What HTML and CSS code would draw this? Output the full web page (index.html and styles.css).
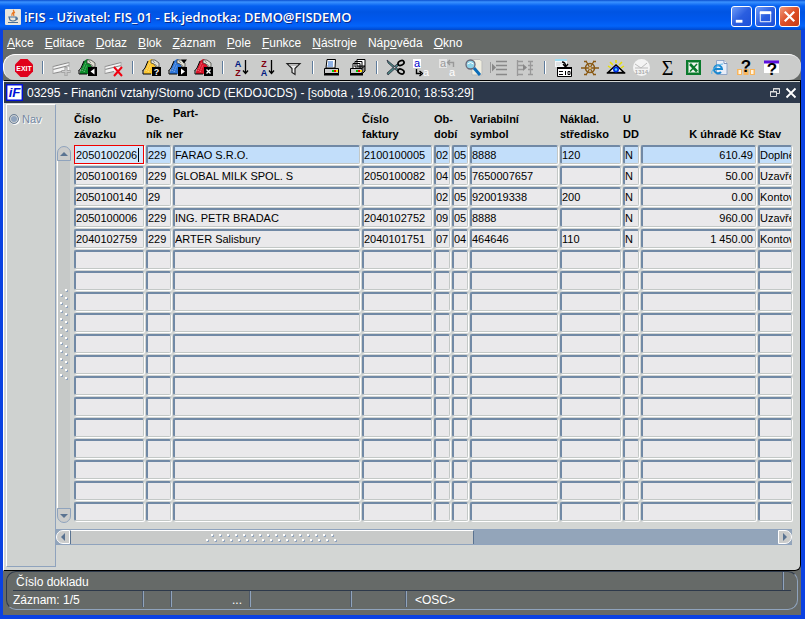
FILE: index.html
```html
<!DOCTYPE html>
<html lang="cs">
<head>
    <meta charset="UTF-8">
    <meta name="viewport" content="width=device-width, initial-scale=1.0">
    <title>iFIS</title>
    <link rel="stylesheet" href="styles.css">
</head>
<body>
    <svg class="defs" aria-hidden="true">
        <symbol id="hand" viewBox="0 0 20 20">
            <path d="M2 14 6 3l3-2 3 1 5 6-4 3-3 5H2z" fill="currentColor"/>
            <path d="M1 12.500 3 10M1 12v4h8M6 3 3 10" fill="none" stroke="#000"/>
            <path d="M4 13 8 4M6 14l3-7" stroke="#fff" stroke-opacity=".5" stroke-dasharray="1 1"/>
            <path d="M9 2h4l4 3v4h-3l-2-3-3-1z" fill="#deded0" stroke="#333" stroke-width=".7"/>
            <path d="M11 3l2 2M13 6l2 2" stroke="#777" stroke-width=".7"/>
            <path d="M10 9h9v9h-9z" fill="#000"/>
        </symbol>
        <symbol id="sheet" viewBox="0 0 20 20">
            <path d="M1 8 17 4v8L1 16z" fill="#f4f4f4"/>
            <path d="M1 8.500 17 4.500M1 11.500l16-4M1 15.500l9-2" stroke="#888" stroke-width="1.200"/>
            <path d="M1 8v8M17 4v5" stroke="#aaa"/>
        </symbol>
    </svg>

    <header class="title-bar">
        <svg class="java" viewBox="0 0 16 16">
            <rect width="16" height="16" rx="1" fill="#e9e6dd"/>
            <path d="M8 1c3 2-3 3-1 6M10 3c-2 1-2 2-1 4" fill="none" stroke="#e87722" stroke-width="1.200"/>
            <path d="M4 8h7v3q-3 2-6 0zM11 8.500q2 0 1 2h-1.500M3 13.500h10" fill="none" stroke="#4a7097" stroke-width="1.200"/>
        </svg>
        <h1>iFIS - Uživatel: FIS_01 - Ek.jednotka: DEMO@FISDEMO</h1>
        <button class="win-btn" aria-label="Minimalizovat"><svg viewBox="0 0 20 20"><path d="M4 15h7" stroke="#fff" stroke-width="3"/></svg></button>
        <button class="win-btn" aria-label="Maximalizovat"><svg viewBox="0 0 20 20"><path d="M4.500 5.500h11v10h-11z" fill="none" stroke="#fff"/><path d="M4 6h12" stroke="#fff" stroke-width="3"/></svg></button>
        <button class="win-btn close" aria-label="Zavřít"><svg viewBox="0 0 20 20"><path d="M5 5l10 10M15 5 5 15" stroke="#fff" stroke-width="2.300"/></svg></button>
    </header>

    <nav class="menu">
        <a href="#"><u>A</u>kce</a>
        <a href="#"><u>E</u>ditace</a>
        <a href="#"><u>D</u>otaz</a>
        <a href="#"><u>B</u>lok</a>
        <a href="#"><u>Z</u>áznam</a>
        <a href="#"><u>P</u>ole</a>
        <a href="#"><u>F</u>unkce</a>
        <a href="#"><u>N</u>ástroje</a>
        <a href="#">Náp<u>o</u>věda</a>
        <a href="#"><u>O</u>kno</a>
    </nav>

    <div class="toolbar">
        <button aria-label="Konec"><svg viewBox="0 0 20 20"><path d="M6.500 1h7L19 6.500v7L13.500 19h-7L1 13.500v-7z" fill="#e0001b"/><text x="10" y="12.500" class="t-exit">EXIT</text></svg></button>
        <i></i>
        <button aria-label="Vložit záznam"><svg viewBox="0 0 20 20"><use href="#sheet"/><path d="M14 9v9M9.500 13.500h9" stroke="#999" stroke-width="3"/><path d="M14 9.500v8M10 13.500h8" stroke="#ccc" stroke-width="1.400"/></svg></button>
        <button class="green" aria-label="Duplikovat"><svg viewBox="0 0 20 20"><use href="#hand"/><path d="M16.500 10.500v6l-4-3z" fill="#fff"/></svg></button>
        <button aria-label="Smazat záznam"><svg viewBox="0 0 20 20"><use href="#sheet"/><path d="M10 9l8 9M18 9l-8 9" stroke="#f00010" stroke-width="2"/></svg></button>
        <i></i>
        <button class="yellow" aria-label="Zadat dotaz"><svg viewBox="0 0 20 20"><use href="#hand"/><text x="14.500" y="17" class="t-badge">?</text></svg></button>
        <button class="blue" aria-label="Provést dotaz"><svg viewBox="0 0 20 20"><use href="#hand"/><path d="M13 10.500v6l4-3z" fill="#fff"/><path d="M13 1.500h6l-3 4z" fill="#000"/></svg></button>
        <button class="red" aria-label="Zrušit dotaz"><svg viewBox="0 0 20 20"><use href="#hand"/><path d="M12.500 11.500l4 4M16.500 11.500l-4 4" stroke="#fff" stroke-width="1.300"/></svg></button>
        <i></i>
        <button aria-label="Seřadit vzestupně"><svg viewBox="0 0 20 20"><text x="6" y="9" class="t-sort" fill="#001a80">A</text><text x="6" y="18" class="t-sort" fill="#800010">Z</text><path d="M13.500 2v13M11 12.500l2.500 3 2.500-3" fill="none" stroke="#000" stroke-width="1.300"/></svg></button>
        <button aria-label="Seřadit sestupně"><svg viewBox="0 0 20 20"><text x="6" y="9" class="t-sort" fill="#800010">Z</text><text x="6" y="18" class="t-sort" fill="#001a80">A</text><path d="M13.500 2v13M11 12.500l2.500 3 2.500-3" fill="none" stroke="#000" stroke-width="1.300"/></svg></button>
        <button aria-label="Filtr"><svg viewBox="0 0 20 20"><path d="M3 5.500h13l-5 5v6l-3-2v-4z" fill="#eee" stroke="#222" stroke-width="1.200"/><path d="M5 7h9" stroke="#888"/></svg></button>
        <i></i>
        <button aria-label="Tisk"><svg viewBox="0 0 20 20"><path d="M5 1.500h8.500L13 10H4z" fill="#fff" stroke="#000"/><path d="M6 4h5M6 6h5M5.500 8H11" stroke="#26c"/><path d="M2.500 10.500h14v5h-14z" fill="#ccc" stroke="#000"/><path d="M2 16.500h15" stroke="#000" stroke-width="2"/><path d="M10 13h2" stroke="#0c0" stroke-width="2"/><path d="M12 13h2" stroke="#e00" stroke-width="2"/><path d="M14 13h2" stroke="#fd0" stroke-width="2"/></svg></button>
        <button aria-label="Tisk sestav"><svg viewBox="0 0 20 20"><path d="M9 1.500h8V8H9zM7 3.500h7V9H7zM5 5.500h7V11H5z" fill="#fff" stroke="#000"/><path d="M2.500 10.500h12v5h-12z" fill="#ccc" stroke="#000"/><path d="M14 10l3-2v5l-3 3z" fill="#888" stroke="#000"/><path d="M2 16.500h13" stroke="#000" stroke-width="2"/><path d="M8 13h2" stroke="#0c0" stroke-width="2"/><path d="M10 13h2" stroke="#e00" stroke-width="2"/><path d="M12 13h2" stroke="#fd0" stroke-width="2"/></svg></button>
        <i></i>
        <button aria-label="Vyjmout"><svg viewBox="0 0 20 20"><path d="M1 2l12 10-2 1L2 5zM2 17 13 7l-2-1L1 15z" fill="#4d8583" stroke="#223" stroke-width=".7"/><ellipse cx="15" cy="5" rx="3.200" ry="2.200" fill="none" stroke="#000" stroke-width="1.700" transform="rotate(-25 15 5)"/><ellipse cx="15" cy="13.500" rx="3.200" ry="2.200" fill="none" stroke="#000" stroke-width="1.700" transform="rotate(25 15 13.500)"/></svg></button>
        <button aria-label="Kopírovat"><svg viewBox="0 0 20 20"><path d="M1 1h8v9H1z" fill="#fff"/><text x="5" y="8.500" class="t-a" fill="#00c">a</text><path d="M4.500 11v4.500H9M7.500 13l3 2.500-3 2.500" fill="none" stroke="#000" stroke-width="1.400"/><text x="14" y="18" class="t-a" fill="#fff">a</text></svg></button>
        <button aria-label="Vložit"><svg viewBox="0 0 20 20"><path d="M1 1h8v9H1z" fill="#e6e6e6"/><text x="5" y="8.500" class="t-a" fill="#999">a</text><path d="M15.500 9V4.500H10M12 2 9.500 4.500 12 7" fill="none" stroke="#999" stroke-width="1.400"/><text x="14" y="18" class="t-a" fill="#fff">a</text></svg></button>
        <button aria-label="Hledat"><svg viewBox="0 0 20 20"><path d="M7 1.500h9l2 2V17H8z" fill="#f0eee0" stroke="#bbb"/><circle cx="6.500" cy="6.500" r="4.500" fill="#8fd4e8" stroke="#667" stroke-width="1.300"/><path d="M3.500 6q3-3 6 0" fill="none" stroke="#fff"/><path d="M10 10l6 7" stroke="#0c6cb8" stroke-width="3"/></svg></button>
        <button aria-label="Seznam hodnot"><svg viewBox="0 0 20 20"><path d="M6 3.500h11M6 7.500h11M6 11.500h11M6 16.500h11" stroke="#888" stroke-width="1.300"/><path d="M2 5.500v8l4-4z" fill="#888"/><path d="M.5 4v11" stroke="#999"/></svg></button>
        <button aria-label="Strom"><svg viewBox="0 0 20 20"><path d="M1.500 2v16M2 3.500h5M2 7.500h5M2 11.500h5M2 16.500h5M12 3.500h5M12 7.500h5M12 11.500h5M12 16.500h5M14.500 3v14" stroke="#999" stroke-width="1.300"/><path d="M7 6v7l4-3.500z" fill="#888"/></svg></button>
        <i></i>
        <button aria-label="Formulář"><svg viewBox="0 0 20 20"><path d="M1 1h12v8H1z" fill="#f4f8fa"/><path d="M1 2h12" stroke="#9cdcf2" stroke-width="2"/><path d="M2 5h6M2 7h4" stroke="#ccc"/><path d="M8 4q3.500 0 3.500 4M9 6l2.500 3L14 6" fill="none" stroke="#000" stroke-width="1.400"/><path d="M3.500 9.500h14v9h-14z" fill="#fff" stroke="#000"/><path d="M3 10h15" stroke="#000" stroke-width="2"/><path d="M5 13.500h4M5 16.500h4" stroke="#000"/><path d="M11.500 13v4M14 13.500h2v3h-2z" fill="none" stroke="#000"/></svg></button>
        <button aria-label="Navigátor"><svg viewBox="0 0 20 20"><circle cx="10" cy="10" r="4.500" fill="none" stroke="#8a5a14" stroke-width="1.600"/><path d="M1 10h18M6 3l8 14M14 3 6 17" stroke="#8a5a14" stroke-width="1.300"/><path d="M4 3.500h3M13 3.500h3M4 16.500h3M13 16.500h3" stroke="#8a5a14" stroke-width="1.600"/><circle cx="10" cy="10" r="1.300" fill="#d9b26a"/></svg></button>
        <button aria-label="Náhled"><svg viewBox="0 0 20 20"><path d="M4 4l3 3M16 4l-3 3M10 2v3M2 8l3 2M18 8l-3 2" stroke="#e8e100" stroke-width="1.500"/><path d="M2 14.500 10 7l8 7.500z" fill="#fff" stroke="#000" stroke-width="1.600"/><path d="M1 15h18" stroke="#000" stroke-width="1.400"/><circle cx="10" cy="11.500" r="3" fill="#0030e0"/><circle cx="10" cy="11.500" r="1.200" fill="#4fd6ff"/></svg></button>
        <button aria-label="Čas"><svg viewBox="0 0 20 20"><circle cx="9.500" cy="9.500" r="8.500" fill="#f4f4f4"/><path d="M3 6l6 4 6-5M3 10h13" fill="none" stroke="#bbb"/><text x="9.500" y="15.500" class="t-clock">1314</text></svg></button>
        <button aria-label="Součet"><svg viewBox="0 0 20 20"><text x="9.500" y="17" class="t-sum">Σ</text></svg></button>
        <button aria-label="Excel"><svg viewBox="0 0 20 20"><path d="M3 3h13v13H3z" fill="#f2f6f0" stroke="#0a7a2c" stroke-width="2"/><path d="M4.500 4.500h10v10h-10z" fill="none" stroke="#0a7a2c" stroke-dasharray="1 1"/><path d="M6 6l7 7.500" stroke="#0a7a2c" stroke-width="2.600"/><path d="M13 6l-7 7.500" stroke="#0a7a2c" stroke-width="1.500"/></svg></button>
        <button aria-label="Internet"><svg viewBox="0 0 20 20"><path d="M6.500 2.500H14l3 3v11H6.500z" fill="#e8eef8" stroke="#8fa6c8"/><path d="M14 2.500v3h3" fill="#fff" stroke="#7a93bb"/><path d="M4 11h8a4 4 0 1 0-1 3" fill="none" stroke="#1687d0" stroke-width="2"/><path d="M2 16c-2-3 5-10 11-10" fill="none" stroke="#5cb9ec"/></svg></button>
        <button aria-label="Nápověda k poli"><svg viewBox="0 0 20 20"><path d="M1 11h5v6H1zM7.500 11h5v6h-5zM14 11h5v6h-5z" fill="#f8b55c"/><path d="M2.500 12h2.500v4H2.500zM15 12h2.500v4H15z" fill="#fff4e0"/><text x="10" y="14" class="t-help">?</text></svg></button>
        <button aria-label="Nápověda k oknu"><svg viewBox="0 0 20 20"><path d="M2 3h15v12H2z" fill="#fff"/><path d="M2 4h15" stroke="#5b0fdc" stroke-width="3"/><text x="10" y="17" class="t-help">?</text></svg></button>
    </div>

    <main class="form-window">
        <div class="form-title">
            <svg class="logo" viewBox="0 0 18 18"><path d="M.5.500h17v17H.500z" fill="#fff" stroke="#0010d8" stroke-width="2"/><text x="9" y="14" class="t-logo">iF</text></svg>
            <h2>03295 - Finanční vztahy/Storno JCD (EKDOJCDS) - [sobota , 19.06.2010; 18:53:29]</h2>
            <button aria-label="Obnovit okno"><svg viewBox="0 0 12 12"><path d="M4.500 1.500h6v5h-6z" fill="none" stroke="#ddd"/><path d="M1.500 4.500h6v5h-6z" fill="#2d394b" stroke="#ddd"/><path d="M4 2h7M1 5h7" stroke="#ddd"/></svg></button>
            <button aria-label="Zavřít okno"><svg viewBox="0 0 12 12"><path d="M1.500 1.500l9 9M10.500 1.500l-9 9" stroke="#fff" stroke-width="1.800"/></svg></button>
        </div>

        <div class="workspace">
            <aside class="side">
                <label><input type="radio" name="nav">Nav</label>
            </aside>

            <div class="content">
                <div class="grid">
                    <div class="v-scroll">
                        <button class="up" aria-label="Nahoru"></button>
                        <div class="v-track"><span class="grip"></span></div>
                        <button class="down" aria-label="Dolů"></button>
                    </div>
                    <table>
                        <colgroup>
                            <col class="w72"><col class="w27"><col><col class="w72"><col class="w18"><col class="w18"><col class="w90"><col class="w63"><col class="w18"><col class="w117"><col class="w34">
                        </colgroup>
                        <thead>
                            <tr>
                                <th>Číslo<br>závazku</th>
                                <th>De-<br>ník</th>
                                <th class="partner"><span class="first">Part-</span><span class="second">ner</span></th>
                                <th>Číslo<br>faktury</th>
                                <th colspan="2">Ob-<br>dobí</th>
                                <th>Variabilní<br>symbol</th>
                                <th>Náklad.<br>středisko</th>
                                <th>U<br>DD</th>
                                <th class="num">K úhradě Kč</th>
                                <th>Stav</th>
                            </tr>
                        </thead>
                        <tbody id="rows"></tbody>
                    </table>
                </div>
                <div class="h-scroll">
                    <button class="left" aria-label="Vlevo"></button>
                    <div class="h-track"><div class="thumb"><span class="grip"></span></div></div>
                    <button class="right" aria-label="Vpravo"></button>
                </div>
            </div>
        </div>
    </main>

    <footer class="status">
        <div class="status-box">
            <div class="hint"><span>Číslo dokladu</span></div>
            <div class="cells">
                <span class="record">Záznam: 1/5</span>
                <span class="cell-s"></span>
                <span class="cell-m dots">...</span>
                <span class="cell-l"></span>
                <span class="cell-n"></span>
                <span class="osc">&lt;OSC&gt;</span>
            </div>
        </div>
    </footer>

    <script src="script.js"></script>
</body>
</html>
```

FILE: styles.css
```css
* {
    box-sizing: border-box;
}
body {
    margin: 0;
    height: 100vh;
    padding: 0 4px 4px 3px;
    display: flex;
    flex-direction: column;
    background: #0a41e2;
    font-family: "Liberation Sans", Arial, sans-serif;
    font-size: 12px;
    overflow: hidden;
}
button {
    padding: 0;
    border: none;
    background: none;
    display: block;
    flex: none;
}
svg {
    display: block;
}
.defs {
    position: absolute;
    width: 0;
    height: 0;
}

/* title bar */
.title-bar {
    display: flex;
    align-items: center;
    gap: 3px;
    height: 30px;
    margin: 0 -4px 0 -3px;
    padding: 3px 5px 0 5px;
    background: linear-gradient(#0a4fd0 0, #3a92ff 2px, #0560f0 6px, #0054e3 12px, #0058ee 20px, #0364fa 26px, #0048cc 30px);
    flex: none;
}
.title-bar .java {
    width: 16px;
    height: 16px;
}
.title-bar h1 {
    flex: 1;
    margin: 0;
    font: 600 13px/18px "Open Sans", sans-serif;
    color: #fff;
    text-shadow: 1px 1px #0a2a8a;
    white-space: nowrap;
    overflow: hidden;
}
.win-btn {
    width: 21px;
    height: 21px;
    border: 1px solid #fff;
    border-radius: 3px;
    background: linear-gradient(135deg, #6f9cf8, #2a5ee0 50%, #1c50d8);
}
.win-btn.close {
    background: linear-gradient(135deg, #f09a7c, #dd4e26 50%, #c83c14);
}

/* menu */
.menu {
    display: flex;
    gap: 11px;
    height: 24px;
    padding: 0 4px;
    background: #666a68;
    line-height: 26px;
    flex: none;
}
.menu a {
    color: #fff;
    text-decoration: none;
}

/* toolbar */
.toolbar {
    display: flex;
    align-items: center;
    gap: 2px;
    height: 26px;
    padding: 0 8px;
    background: #cbcccb;
    border-top: 1px solid #fff;
    border-left: 1px solid #fff;
    border-radius: 12px;
    box-shadow: 0 0 0 6px #666a68;
    clip-path: inset(0);
    flex: none;
}
.toolbar button {
    width: 24px;
    height: 24px;
    padding: 2px;
}
.toolbar svg {
    width: 20px;
    height: 20px;
}
.toolbar i {
    width: 2px;
    height: 13px;
    margin: 0 4px;
    border-left: 1px solid #5f7c9c;
    border-right: 1px solid #fff;
}
.green { color: #0a8a28; }
.yellow { color: #fbc62e; }
.blue { color: #2b74d8; }
.red { color: #dc1428; }
.toolbar text,
.t-logo {
    text-anchor: middle;
    font-family: "Liberation Sans", Arial, sans-serif;
    font-weight: bold;
}
.toolbar .t-exit { font-size: 7px; fill: #fff; }
.toolbar .t-badge { font-size: 9px; fill: #fff; }
.toolbar .t-sort { font-size: 9px; }
.toolbar .t-a { font-size: 11px; font-weight: normal; }
.toolbar .t-clock { font-size: 6px; fill: #aaa; }
.toolbar .t-sum { font: 20px "Liberation Serif", serif; fill: #000; }
.toolbar .t-help { font-size: 17px; fill: #000; }
.t-logo { font-size: 14px; font-style: italic; fill: #0010d8; }

/* inner window */
.form-window {
    flex: 1;
    display: flex;
    flex-direction: column;
    min-height: 0;
    background: #d3d6d4;
    border: 1px solid #000;
    border-left-color: #fff;
    border-radius: 0 0 6px 0;
    box-shadow: 0 0 0 6px #666a68;
    clip-path: inset(0);
}
.form-title {
    display: flex;
    align-items: center;
    gap: 4px;
    height: 22px;
    padding: 0 3px 0 2px;
    background: #2d394b;
    border-top: 1px solid #d3d6d4;
    flex: none;
}
.form-title .logo {
    width: 17px;
    height: 17px;
}
.form-title h2 {
    flex: 1;
    margin: 0;
    font-size: 12px;
    font-weight: normal;
    color: #fff;
    white-space: nowrap;
    overflow: hidden;
}
.form-title button svg {
    width: 12px;
    height: 12px;
}
.workspace {
    flex: 1;
    display: flex;
    min-height: 0;
    padding: 1px 8px 3px 2px;
}
.side {
    width: 50px;
    padding: 8px 2px;
    background: #cfd2d0;
    border: 1px solid #fff;
    border-right-color: #8fa3bd;
    border-bottom-color: #8fa3bd;
    flex: none;
}
.side label {
    display: flex;
    align-items: center;
    gap: 3px;
    color: #7388a3;
    text-shadow: 1px 1px #fff;
    font-size: 11px;
}
.side input {
    appearance: none;
    width: 10px;
    height: 10px;
    margin: 0;
    border: 1px solid #6d7f95;
    border-radius: 50%;
    background: #8fa3bd;
    box-shadow: inset 0 0 0 1px #d3d6d4, 1px 1px #fff;
}
.content {
    flex: 1;
    min-width: 0;
}
.grid {
    display: flex;
    gap: 4px;
    margin-bottom: 6px;
}

/* vertical scroll bar */
.v-scroll {
    width: 13px;
    margin: 42px 0 0 1px;
    display: flex;
    flex-direction: column;
    flex: none;
}
.v-track {
    flex: 1;
    display: flex;
    align-items: center;
    justify-content: center;
    background: #c6c9c8;
    border-left: 1px solid #fff;
}
.grip {
    background:
        conic-gradient(from 270deg at 2px 2px, #fff 90deg, transparent 0) 0 5px / 8px 8px,
        conic-gradient(from 270deg at 2px 2px, #fff 90deg, transparent 0) 5px 0 / 8px 8px,
        conic-gradient(from 270deg at 2px 2px, #8fa3bd 90deg, transparent 0) 1px 6px / 8px 8px,
        conic-gradient(from 270deg at 2px 2px, #8fa3bd 90deg, transparent 0) 6px 1px / 8px 8px;
}
.v-track .grip {
    width: 8px;
    height: 92px;
}
.v-scroll button,
.h-scroll button {
    display: flex;
    align-items: center;
    justify-content: center;
    width: 14px;
    height: 15px;
    background: #cbcccb;
    border: 1px solid #8fa3bd;
}
.v-scroll .up { border-radius: 7px 7px 0 0; }
.v-scroll .down { border-radius: 0 0 7px 7px; }
.v-scroll button::before,
.h-scroll button::before {
    content: "";
    border: 4px solid transparent;
}
.v-scroll .up::before {
    border-top-width: 0;
    border-bottom-color: #5a7391;
}
.v-scroll .down::before {
    border-bottom-width: 0;
    border-top-color: #5a7391;
}

/* records */
table {
    flex: 1;
    min-width: 0;
    table-layout: fixed;
    border-collapse: collapse;
}
.w18 { width: 18px; }
.w27 { width: 27px; }
.w34 { width: 34px; }
.w63 { width: 63px; }
.w72 { width: 72px; }
.w90 { width: 90px; }
.w117 { width: 117px; }
th {
    height: 41px;
    padding: 0 0 3px;
    font-size: 11px;
    line-height: 15px;
    text-align: left;
    vertical-align: bottom;
    white-space: nowrap;
}
th.num {
    text-align: right;
    padding-right: 4px;
}
th.partner span {
    display: block;
}
th.partner .first {
    margin-bottom: 6px;
}
th.partner .second {
    margin-left: -7px;
}
td {
    position: relative;
    height: 21px;
    padding: 0 2px 2px 0;
}
td:last-child {
    padding-right: 0;
}
td input {
    display: block;
    width: 100%;
    height: 19px;
    padding: 0;
    font: 11px "Liberation Sans", Arial, sans-serif;
    color: #000;
    background: #eae9eb;
    border: solid;
    border-width: 2px 1px 1px 2px;
    border-color: #7189a5 #c3c8c6 #c3c8c6 #7189a5;
    border-radius: 2px;
    box-shadow: 1px 1px #fff;
    outline: none;
}
td input.num {
    text-align: right;
    padding-right: 2px;
}
tr.current input {
    background: #c2defa;
}
tr.current input.active {
    background: #d3e8fc;
    border-color: #f00000;
    border-width: 1px;
    border-radius: 0;
    padding-left: 1px;
}
.caret {
    position: absolute;
    left: 64px;
    top: 3px;
    width: 1px;
    height: 14px;
    background: #000;
}

/* horizontal scroll bar */
.h-scroll {
    display: flex;
    height: 16px;
    background: #93a5ba;
    border: 1px solid #8fa3bd;
    border-width: 1px 0;
}
.h-scroll button {
    height: 14px;
    border-color: #fff;
}
.h-scroll .left { border-radius: 7px 0 0 7px; }
.h-scroll .right { border-radius: 0 7px 7px 0; }
.h-scroll .left::before {
    border-left-width: 0;
    border-right-color: #5a7391;
}
.h-scroll .right::before {
    border-right-width: 0;
    border-left-color: #5a7391;
}
.h-track {
    flex: 1;
}
.thumb {
    display: flex;
    align-items: center;
    justify-content: center;
    width: 57%;
    height: 14px;
    background: #c8cac9;
    border-top: 1px solid #fff;
    border-left: 1px solid #5a7391;
    border-right: 1px solid #5a7391;
}
.thumb .grip {
    width: 132px;
    height: 8px;
}

/* status bar */
.status {
    height: 44px;
    padding: 0 3px 5px;
    background: #666a68;
    color: #fff;
    flex: none;
}
.status-box {
    height: 39px;
    padding: 0 6px;
    border: 1px solid #2d394b;
    border-right-color: #8fa3bd;
    border-bottom-color: #8fa3bd;
    border-radius: 10px;
}
.hint {
    height: 19px;
    padding: 0 7px 0 3px;
    line-height: 20px;
    border-bottom: 1px solid #2d394b;
}
.hint span {
    display: block;
    height: 18px;
    border-right: 2px groove #8fa3bd;
}
.cells {
    display: flex;
    height: 16px;
    line-height: 18px;
}
.cells span {
    border-right: 2px groove #8fa3bd;
    flex: none;
}
.cells .record { width: 131px; }
.cells .cell-s { width: 28px; }
.cells .cell-m { width: 79px; }
.cells .cell-l { width: 101px; }
.cells .cell-n { width: 55px; }
.cells .dots {
    text-align: right;
    padding-right: 7px;
}
.cells .osc {
    flex: 1;
    border: none;
    padding-left: 8px;
}
```

FILE: script.js
```js
const columns = ["Číslo závazku", "Deník", "Partner", "Číslo faktury", "Období měsíc", "Období rok",
    "Variabilní symbol", "Náklad. středisko", "UDD", "K úhradě Kč", "Stav"];

const records = [
    ["2050100206", "229", "FARAO S.R.O.", "2100100005", "02", "05", "8888", "120", "N", "610.49", "Doplněn"],
    ["2050100169", "229", "GLOBAL MILK SPOL. S", "2050100082", "04", "05", "7650007657", "", "N", "50.00", "Uzavřen"],
    ["2050100140", "29", "", "", "02", "05", "920019338", "200", "N", "0.00", "Kontován"],
    ["2050100006", "229", "ING. PETR BRADAC", "2040102752", "09", "05", "8888", "", "N", "960.00", "Uzavřen"],
    ["2040102759", "229", "ARTER Salisbury", "2040101751", "07", "04", "464646", "110", "N", "1 450.00", "Kontován"]
];

const visibleRows = 18;
const tbody = document.getElementById("rows");

for (let r = 0; r < visibleRows; r++) {
    const tr = document.createElement("tr");
    if (r === 0) tr.className = "current";
    columns.forEach((name, c) => {
        const td = document.createElement("td");
        const input = document.createElement("input");
        input.type = "text";
        input.value = records[r] ? records[r][c] : "";
        input.setAttribute("aria-label", name + " " + (r + 1));
        if (name === "K úhradě Kč") input.className = "num";
        td.appendChild(input);
        if (r === 0 && c === 0) {
            input.className = "active";
            const caret = document.createElement("span");
            caret.className = "caret";
            td.appendChild(caret);
        }
        tr.appendChild(td);
    });
    tbody.appendChild(tr);
}
```
